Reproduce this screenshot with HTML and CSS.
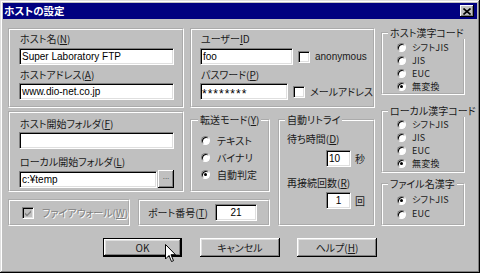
FILE: index.html
```html
<!DOCTYPE html>
<html lang="ja">
<head>
<meta charset="utf-8">
<title>ホストの設定</title>
<link rel="stylesheet" href="styles.css">
</head>
<body>
<div class="window">
  <div class="titlebar">
    <span class="title">ホストの設定</span>
    <span class="close"><svg width="8" height="7" viewBox="0 0 8 7"><path d="M0.5 0.5 L7.5 6.5 M7.5 0.5 L0.5 6.5" stroke="#000" stroke-width="1.6" fill="none"/></svg></span>
  </div>
  <div class="dialog">
    <div class="panes">
      <div class="main">
        <div class="row top">
          <div class="box host">
            <div class="lbl">ホスト名(<u>N</u>)</div>
            <div class="field f-host">Super Laboratory FTP</div>
            <div class="lbl lbl-2">ホストアドレス(<u>A</u>)</div>
            <div class="field f-host f-2">www.dio-net.co.jp</div>
          </div>
          <div class="box user">
            <div class="lbl">ユーザー<u>I</u>D</div>
            <div class="line l-1">
              <div class="field f-user">foo</div>
              <span class="check"></span>
              <span class="latin">anonymous</span>
            </div>
            <div class="lbl lbl-2">パスワード(<u>P</u>)</div>
            <div class="line l-2">
              <div class="field f-user pass">********</div>
              <span class="check"></span>
              <span class="chk-text">メールアドレス</span>
            </div>
          </div>
        </div>
        <div class="row bottom">
          <div class="sub">
            <div class="row mid">
              <div class="box folders">
                <div class="lbl">ホスト開始フォルダ(<u>F</u>)</div>
                <div class="field f-host f-folder"></div>
                <div class="lbl lbl-local">ローカル開始フォルダ(<u>L</u>)</div>
                <div class="line l-local">
                  <div class="field f-local">c:¥temp</div>
                  <span class="btn-browse">...</span>
                </div>
              </div>
              <fieldset class="group mode">
                <legend>転送モード(<u>Y</u>)</legend>
                <div class="opts">
                  <div class="opt"><span class="radio"></span><span class="otext">テキスト</span></div>
                  <div class="opt"><span class="radio"></span><span class="otext">バイナリ</span></div>
                  <div class="opt"><span class="radio on"></span><span class="otext">自動判定</span></div>
                </div>
              </fieldset>
            </div>
            <div class="row low">
              <div class="box firewall">
                <span class="check disabled"><svg width="8" height="8" viewBox="0 0 8 8"><path d="M1 3.5 L3 5.5 L7 1.5 L7 3.5 L3 7.5 L1 5.5 Z" fill="#808080"/></svg></span>
                <span class="dis-text">ファイアウォール(<u>W</u>)</span>
              </div>
              <div class="box port">
                <span class="ptext">ポート番号(<u>T</u>)</span>
                <div class="field f-port">21</div>
              </div>
            </div>
          </div>
          <fieldset class="group retry">
            <legend>自動リトライ</legend>
            <div class="lbl r-lbl">待ち時間(<u>D</u>)</div>
            <div class="line r-line">
              <div class="field f-num">10</div>
              <span class="unit">秒</span>
            </div>
            <div class="lbl r-lbl r-lbl2">再接続回数(<u>R</u>)</div>
            <div class="line r-line r-line2">
              <div class="field f-num f-center">1</div>
              <span class="unit">回</span>
            </div>
          </fieldset>
        </div>
      </div>
      <div class="side">
        <fieldset class="group kanji k1">
          <legend>ホスト漢字コード</legend>
          <div class="opt"><span class="radio"></span><span class="otext">シフトJIS</span></div>
          <div class="opt"><span class="radio"></span><span class="otext">JIS</span></div>
          <div class="opt"><span class="radio"></span><span class="otext">EUC</span></div>
          <div class="opt"><span class="radio on"></span><span class="otext">無変換</span></div>
        </fieldset>
        <fieldset class="group kanji k2">
          <legend>ローカル漢字コード</legend>
          <div class="opt"><span class="radio"></span><span class="otext">シフトJIS</span></div>
          <div class="opt"><span class="radio"></span><span class="otext">JIS</span></div>
          <div class="opt"><span class="radio"></span><span class="otext">EUC</span></div>
          <div class="opt"><span class="radio on"></span><span class="otext">無変換</span></div>
        </fieldset>
        <fieldset class="group kanji k3">
          <legend>ファイル名漢字</legend>
          <div class="opt"><span class="radio on"></span><span class="otext">シフトJIS</span></div>
          <div class="opt"><span class="radio"></span><span class="otext">EUC</span></div>
        </fieldset>
      </div>
    </div>
    <div class="buttons">
      <span class="btn default">OK</span>
      <span class="btn">キャンセル</span>
      <span class="btn">ヘルプ(<u>H</u>)</span>
    </div>
  </div>
</div>
<svg class="cursor" width="12" height="19" viewBox="0 0 12 19"><path d="M0.5 0.5 L0.5 15 L4 11.5 L6.5 17.5 L8.5 16.7 L6 10.7 L10.5 10.7 Z" fill="#fff" stroke="#000" stroke-width="1"/></svg>
</body>
</html>
```

FILE: styles.css
```css
html, body {
  margin: 0;
  padding: 0;
  background: #c0c0c0;
}
body {
  position: relative;
  width: 480px;
  height: 273px;
  overflow: hidden;
  font-family: "Noto Sans CJK JP", "Liberation Sans", sans-serif;
  font-size: 10px;
  line-height: 12px;
  font-feature-settings: "palt";
  color: #1a1a1a;
}
u { text-decoration: underline; }

.window {
  box-sizing: border-box;
  width: 480px;
  height: 273px;
  padding: 3px;
  background: #c0c0c0;
  box-shadow: inset -1px -1px 0 #000, inset 1px 1px 0 #dfdfdf,
              inset -2px -2px 0 #808080, inset 2px 2px 0 #fff;
  display: flex;
  flex-direction: column;
}

.titlebar {
  height: 16px;
  background: #000080;
  display: flex;
  align-items: center;
  justify-content: space-between;
  padding: 0 3px 0 1px;
}
.title {
  color: #fff;
  font-weight: bold;
  font-size: 10.5px;
  line-height: 16px;
}
.close {
  box-sizing: border-box;
  width: 14px;
  height: 12px;
  background: #c0c0c0;
  box-shadow: inset -1px -1px 0 #000, inset 1px 1px 0 #fff, inset -2px -2px 0 #808080;
  display: flex;
  align-items: center;
  justify-content: center;
}

.dialog {
  flex: 1;
  padding: 9px 0 0 5px;
}
.panes {
  display: flex;
  gap: 6px;
}
.main {
  width: 367px;
  display: flex;
  flex-direction: column;
}
.row { display: flex; }
.top { gap: 6px; height: 80px; }
.bottom { gap: 8px; margin-top: 3px; }
.sub { width: 262px; display: flex; flex-direction: column; }
.mid { gap: 6px; height: 81px; }
.low { gap: 8px; margin-top: 7px; height: 27px; }

.box {
  box-sizing: border-box;
  border: 2px groove #fff;
}
.host { width: 176px; padding: 3px 8px 0 9px; }
.user { width: 185px; padding: 3px 0 0 8px; }
.folders { width: 176px; padding: 5px 8px 0 9px; }
.firewall {
  width: 122px;
  display: flex;
  align-items: center;
  padding-left: 12px;
}
.port {
  width: 132px;
  display: flex;
  align-items: center;
  padding-left: 8px;
}

.lbl {
  display: block;
  height: 12px;
  line-height: 12px;
  margin-left: 1px;
  white-space: nowrap;
}
.lbl-2 { margin-top: 4px; }
.lbl-local { margin-top: 7px; }

.field {
  box-sizing: border-box;
  height: 17px;
  background: #fff;
  border: 1px solid;
  border-color: #808080 #fff #fff #808080;
  box-shadow: inset 1px 1px 0 #000, inset -1px -1px 0 #dfdfdf;
  font-family: "Liberation Sans", Arial, sans-serif;
  font-size: 10px;
  line-height: 15px;
  padding-left: 2px;
  white-space: nowrap;
  overflow: hidden;
  color: #000;
}
.f-host { width: 155px; margin-top: 3px; }
.f-2 { margin-top: 2px; }
.f-folder { margin-top: 2px; }
.f-user { width: 93px; }
.pass {
  font-size: 12px;
  letter-spacing: 1px;
  line-height: 20px;
  padding-left: 1px;
}
.f-local { width: 138px; }
.f-port { width: 42px; margin-left: auto; margin-right: 11px; text-align: center; padding-left: 0; }
.f-num { width: 25px; margin-left: 46px; }
.f-center { text-align: center; padding-left: 0; }

.line {
  display: flex;
  align-items: center;
}
.l-1 { margin-top: 3px; }
.l-2 { margin-top: 2px; }
.l-local { margin-top: 2px; gap: 1px; }

.check {
  box-sizing: border-box;
  width: 12px;
  height: 12px;
  background: #fff;
  border: 1px solid;
  border-color: #808080 #fff #fff #808080;
  box-shadow: inset 1px 1px 0 #000, inset -1px -1px 0 #dfdfdf;
  margin-left: 5px;
  flex: none;
  display: flex;
  align-items: center;
  justify-content: center;
}
.check.disabled {
  background: #c0c0c0;
  margin-left: 0;
}
.latin {
  font-family: "Liberation Sans", Arial, sans-serif;
  font-size: 10px;
  margin-left: 5px;
}
.chk-text { margin-left: 5px; white-space: nowrap; }
.dis-text {
  margin-left: 8px;
  color: #808080;
  text-shadow: 1px 1px 0 #fff;
  white-space: nowrap;
}
.ptext { white-space: nowrap; }

.btn-browse {
  box-sizing: border-box;
  width: 16px;
  height: 18px;
  background: #c0c0c0;
  box-shadow: inset -1px -1px 0 #000, inset 1px 1px 0 #fff, inset -2px -2px 0 #808080;
  font-family: "Liberation Sans", Arial, sans-serif;
  font-size: 8px;
  line-height: 14px;
  text-align: center;
  color: #404040;
}

.group {
  box-sizing: border-box;
  margin: 0;
  padding: 0;
  min-width: 0;
  border: 2px groove #fff;
}
.group legend {
  padding: 0 2px;
  line-height: 12px;
  height: 12px;
  font-size: 10px;
  white-space: nowrap;
}
.mode { width: 80px; height: 78px; margin-top: 3px; }
.mode legend { margin-left: 6px; }
.mode .opts { padding-top: 6px; }
.mode .opt { height: 17px; padding-left: 9px; }
.mode .otext { margin-left: 7px; }

.retry { width: 97px; height: 112px; margin-top: 3px; padding-top: 7px; }
.retry legend { margin-left: 5px; }
.r-lbl { margin-left: 7px; }
.r-line { margin-top: 5px; }
.r-lbl2 { margin-top: 10px; }
.r-line2 { margin-top: 3px; }
.unit { margin-left: 4px; }

.opt {
  display: flex;
  align-items: center;
  white-space: nowrap;
  line-height: 12px;
}
.radio {
  position: relative;
  box-sizing: border-box;
  width: 9px;
  height: 9px;
  border-radius: 50%;
  background: #fff;
  border: 1px solid;
  border-color: #808080 #fff #fff #808080;
  box-shadow: inset 1px 1px 0 #000;
  flex: none;
}
.radio.on::after {
  content: "";
  position: absolute;
  left: 2px;
  top: 2px;
  width: 3px;
  height: 3px;
  border-radius: 50%;
  background: #000;
}

.side {
  width: 84px;
  display: flex;
  flex-direction: column;
  margin-top: -1px;
}
.kanji legend { margin-left: 5px; }
.kanji .opt { padding-left: 14px; }
.kanji .otext { margin-left: 6px; font-size: 9px; letter-spacing: 0.2px; }
.k1 { height: 68px; padding-top: 2px; }
.k1 .opt { height: 13px; }
.k2 { height: 68px; margin-top: 10px; padding-top: 1px; }
.k2 .opt { height: 13px; }
.k3 { height: 48px; margin-top: 5px; padding-top: 3px; }
.k3 .opt { height: 14px; }

.buttons {
  display: flex;
  margin-top: 12px;
  margin-left: 95px;
}
.btn {
  box-sizing: border-box;
  width: 80px;
  height: 19px;
  background: #c0c0c0;
  box-shadow: inset -1px -1px 0 #000, inset 1px 1px 0 #fff,
              inset -2px -2px 0 #808080, inset 2px 2px 0 #dfdfdf;
  display: flex;
  align-items: center;
  justify-content: center;
  line-height: 12px;
}
.btn + .btn { margin-left: 17px; }
.btn.default {
  width: 79px;
  border: 1px solid #000;
  margin-right: 1px;
}

.cursor {
  position: absolute;
  left: 165px;
  top: 244px;
}
```
